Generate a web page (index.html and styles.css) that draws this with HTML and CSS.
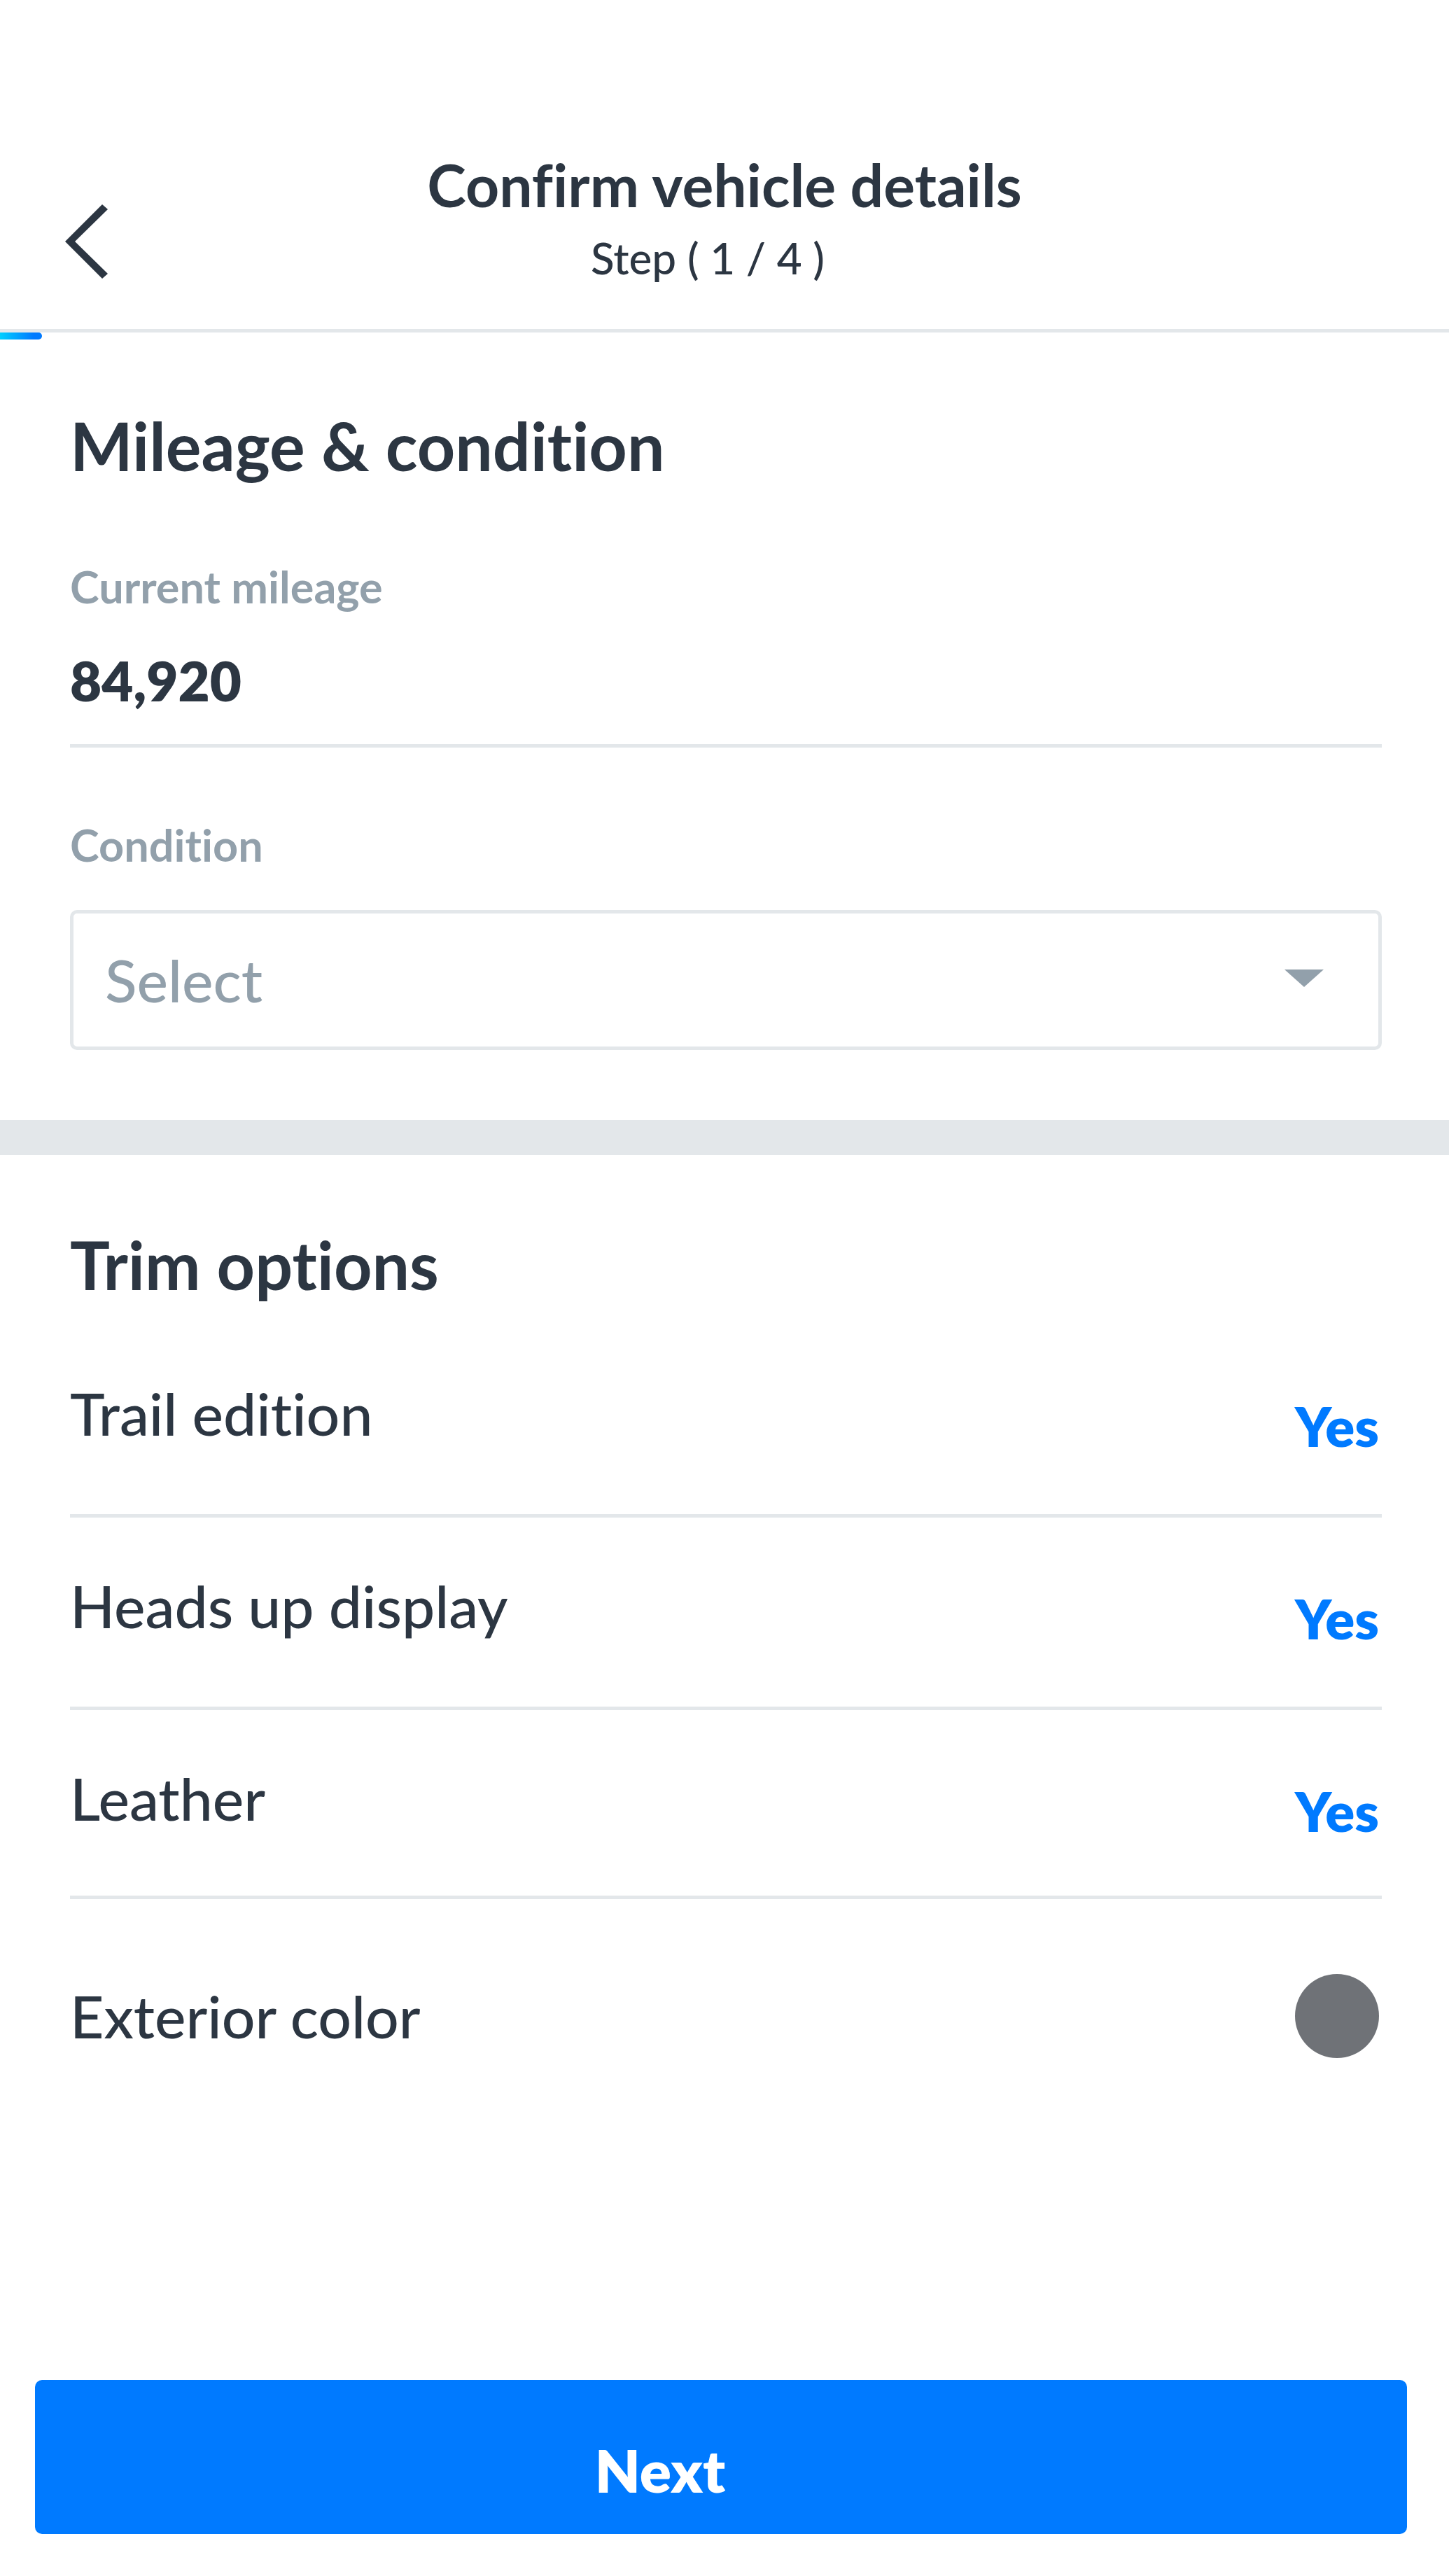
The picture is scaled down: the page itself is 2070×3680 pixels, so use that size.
FILE: index.html
```
<!DOCTYPE html>
<html lang="en">
<head>
  <meta charset="utf-8">
  <meta name="viewport" content="width=device-width, initial-scale=1">
  <title>Confirm vehicle details</title>
  <link rel="stylesheet" href="styles.css">
</head>
<body>
  <header class="header">
    <button class="back" type="button" aria-label="Back">
      <svg class="back-icon" viewBox="0 0 61 106" aria-hidden="true">
        <path d="M53 0 61 7 14 53 61 99 53 106 0 53Z" fill="currentColor"/>
      </svg>
    </button>
    <div class="header-text">
      <h1 class="title">Confirm vehicle details</h1>
      <p class="step">Step ( 1 / 4 )</p>
    </div>
  </header>
  <div class="progress" role="progressbar" aria-label="Progress" aria-valuemin="0" aria-valuemax="100" aria-valuenow="3">
    <div class="progress-bar" style="width: 2.9%"></div>
  </div>

  <main>
    <section class="section condition">
      <h2 class="heading">Mileage &amp; condition</h2>
      <label class="label" for="mileage">Current mileage</label>
      <input class="mileage" id="mileage" type="text" inputmode="numeric" value="84,920">
      <label class="label" for="condition">Condition</label>
      <div class="select-wrap">
        <select class="select" id="condition">
          <option>Select</option>
        </select>
        <svg class="select-arrow" viewBox="0 0 56 25" aria-hidden="true">
          <path d="M0 0H56L28 25Z" fill="currentColor"/>
        </svg>
      </div>
    </section>

    <section class="section trim">
      <h2 class="heading">Trim options</h2>
      <dl class="options">
        <div class="option"><dt>Trail edition</dt><dd class="value">Yes</dd></div>
        <div class="option"><dt>Heads up display</dt><dd class="value">Yes</dd></div>
        <div class="option option-last"><dt>Leather</dt><dd class="value">Yes</dd></div>
        <div class="color-row">
          <dt>Exterior color</dt>
          <dd class="swatch-cell"><button class="swatch" type="button" aria-label="Gray"></button></dd>
        </div>
      </dl>
    </section>
  </main>

  <footer class="footer">
    <button class="next" type="button">Next</button>
  </footer>
</body>
</html>
```
FILE: styles.css
```
:root {
  --ink: #2c3642;
  --muted: #92a0ab;
  --line: #e3e7ea;
  --blue: #007aff;
}

* {
  box-sizing: border-box;
  margin: 0;
  padding: 0;
}

body {
  display: flex;
  flex-direction: column;
  min-height: 100vh;
  background: #fff;
  color: var(--ink);
  font-family: Lato, "Open Sans", sans-serif;
  font-size: 84px;
  font-weight: 500;
  line-height: 100px;
  font-variant-ligatures: none;
}

button,
input,
select {
  border: 0;
  border-radius: 0;
  background: none;
  color: inherit;
  font: inherit;
  font-variant-ligatures: none;
}

/* Header */
.header {
  display: grid;
  grid-template-columns: 1fr auto 1fr;
  padding: 214px 85px 62px;
  border-bottom: 5px solid var(--line);
}

.back {
  align-self: end;
  justify-self: start;
  padding: 8px 8px 10px;
}

.back-icon {
  display: block;
  width: 61px;
  height: 106px;
}

.header-text {
  display: grid;
  gap: 14px;
  text-align: center;
}

.title {
  font-size: 84px;
  font-weight: 700;
}

.step {
  padding-right: 48px;
  font-size: 62px;
  line-height: 80px;
}

.progress {
  height: 10px;
}

.progress-bar {
  height: 100%;
  border-radius: 0 5px 5px 0;
  background: linear-gradient(90deg, #00cfff, var(--blue) 80%);
}

/* Sections */
.section {
  padding: 96px 96px 100px 100px;
}

.heading {
  font-size: 95px;
  font-weight: 700;
  line-height: 110px;
}

.condition {
  display: flex;
  flex-direction: column;
  border-bottom: 50px solid var(--line);
}

.label {
  color: var(--muted);
  font-size: 63px;
  font-weight: 700;
  line-height: 80px;
}

.heading + .label {
  margin-top: 107px;
}

.mileage {
  width: 100%;
  height: 146px;
  margin: 44px 0 99px;
  padding-bottom: 41px;
  border-bottom: 5px solid var(--line);
  font-size: 78px;
  font-weight: 800;
}

.select-wrap {
  position: relative;
  margin-top: 53px;
}

.select {
  display: block;
  width: 100%;
  height: 200px;
  padding: 0 45px;
  border: 5px solid var(--line);
  border-radius: 10px;
  appearance: none;
  color: var(--muted);
}

.select-arrow {
  position: absolute;
  top: 85px;
  right: 83px;
  width: 56px;
  height: 25px;
  color: var(--muted);
  pointer-events: none;
}

/* Trim options */
.trim {
  padding-top: 101px;
}

.options {
  padding-top: 32px;
}

.option {
  display: flex;
  justify-content: space-between;
  padding: 76px 4px 76px 0;
  border-bottom: 5px solid var(--line);
}

.option-last {
  padding-bottom: 71px;
}

.value {
  padding-top: 18px;
  color: var(--blue);
  font-size: 78px;
  font-weight: 800;
}

.color-row {
  display: flex;
  align-items: center;
  justify-content: space-between;
  padding: 107px 4px 0 0;
}

.swatch {
  display: block;
  width: 120px;
  height: 120px;
  border-radius: 50%;
  background: #6f7277;
}

/* Footer */
.footer {
  margin-top: auto;
  padding: 0 60px 60px 50px;
}

.next {
  display: block;
  width: 100%;
  padding: 79px 174px 41px 0;
  border-radius: 10px;
  background: var(--blue);
  color: #fff;
  font-weight: 800;
}
```
